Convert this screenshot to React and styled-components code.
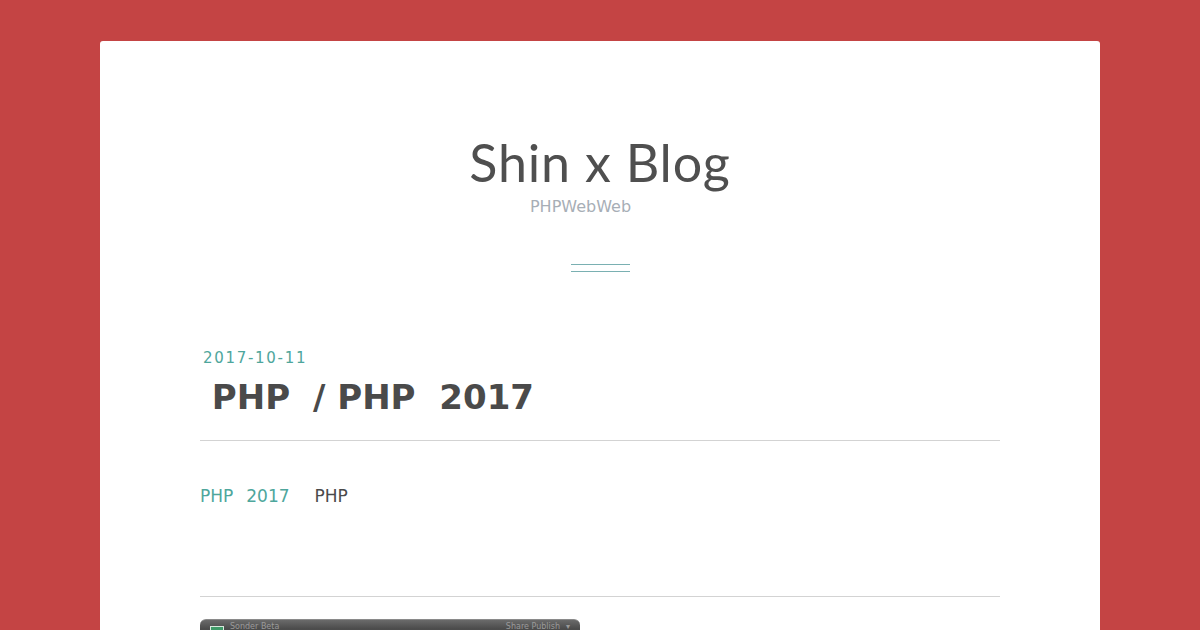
import React from 'react';
import styled, { createGlobalStyle } from 'styled-components'

const GlobalStyle = createGlobalStyle`
    html, body {
        margin: 0;
        padding: 0;
        background-color: #c44444;
    }
    body {
        font-family: "DejaVu Sans", sans-serif;
        overflow: hidden;
    }
`

const Page = styled.div`
    padding-top: 41px;
    height: 630px;
    box-sizing: border-box;
`

const Card = styled.div`
    width: 1000px;
    margin: 0 auto;
    min-height: 700px;
    box-sizing: border-box;
    padding: 88px 100px 0;
    background-color: #fff;
    border-radius: 3px;
`

const Header = styled.header`
    display: flex;
    flex-direction: column;
    align-items: center;
`

const SiteTitle = styled.h1`
    margin: 0;
    font-family: Lato, sans-serif;
    font-weight: 400;
    font-size: 52px;
    line-height: 67px;
    letter-spacing: 0.8px;
    color: #4f4f4f;
`

const Tagline = styled.p`
    margin: 1px 0 0;
    padding-right: 39px;
    font-size: 16px;
    color: #a7aeb6;
`

const Divider = styled.div`
    width: 59px;
    height: 6px;
    margin-top: 48px;
    border-top: 1px solid #7ab0b2;
    border-bottom: 1px solid #7ab0b2;
`

const Post = styled.article`
    margin-top: 77px;
`

const PostDate = styled.div`
    padding-left: 3px;
    font-size: 15px;
    letter-spacing: 1.7px;
    color: #4ea69c;
`

const PostTitle = styled.h2`
    margin: 10px 0 0;
    font-size: 34px;
    font-weight: 700;
    color: #4a4a4a;
    white-space: pre;
`

const Gap = styled.span`
    display: inline-block;
    width: ${p => p.$w}px;
`

const Rule = styled.hr`
    margin: ${p => p.$top}px 0 0;
    border: 0;
    border-top: 1px solid #d3d3d3;
`

const Excerpt = styled.p`
    margin: 45px 0 0;
    font-size: 17px;
    color: #4a4a4a;
    white-space: pre;
`

const Tag = styled.span`
    color: #4ea69c;
`

const Shot = styled.div`
    width: 380px;
    height: 30px;
    margin-top: 22px;
    border-radius: 6px 6px 0 0;
    background: linear-gradient(#6a6a6a, #4c4c4c 30%, #474747);
    border-top: 1px solid #8a8a8a;
    display: flex;
    align-items: flex-start;
    gap: 6px;
    padding: 6px 10px 0;
    box-sizing: border-box;
`

const AppIcon = styled.span`
    width: 14px;
    height: 14px;
    box-sizing: border-box;
    border: 1px solid #d8e8dc;
    background-color: #3f9a68;
`

const ShotText = styled.span`
    margin-top: -3px;
    font-size: 8px;
    line-height: 8px;
    color: #9a9a9a;
    flex: ${p => (p.$grow ? 1 : 'none')};
`

const App = () => {
    return(<>
        <GlobalStyle />
        <Page>
            <Card>
                <Header>
                    <SiteTitle>Shin x Blog</SiteTitle>
                    <Tagline>PHPWebWeb</Tagline>
                    <Divider />
                </Header>
                <Post>
                    <PostDate>2017-10-11</PostDate>
                    <PostTitle>
                        {' PHP '}<Gap $w={11} />{'/ PHP '}<Gap $w={12} />{'2017'}
                    </PostTitle>
                    <Rule $top={23} />
                    <Excerpt>
                        <Tag>PHP<Gap $w={13} />2017</Tag><Gap $w={25} />PHP
                    </Excerpt>
                    <Rule $top={90} />
                    <Shot>
                        <AppIcon />
                        <ShotText $grow>Sonder Beta</ShotText>
                        <ShotText>Share  Publish</ShotText>
                        <ShotText>▾</ShotText>
                    </Shot>
                </Post>
            </Card>
        </Page>
    </>)
}

export default App;
